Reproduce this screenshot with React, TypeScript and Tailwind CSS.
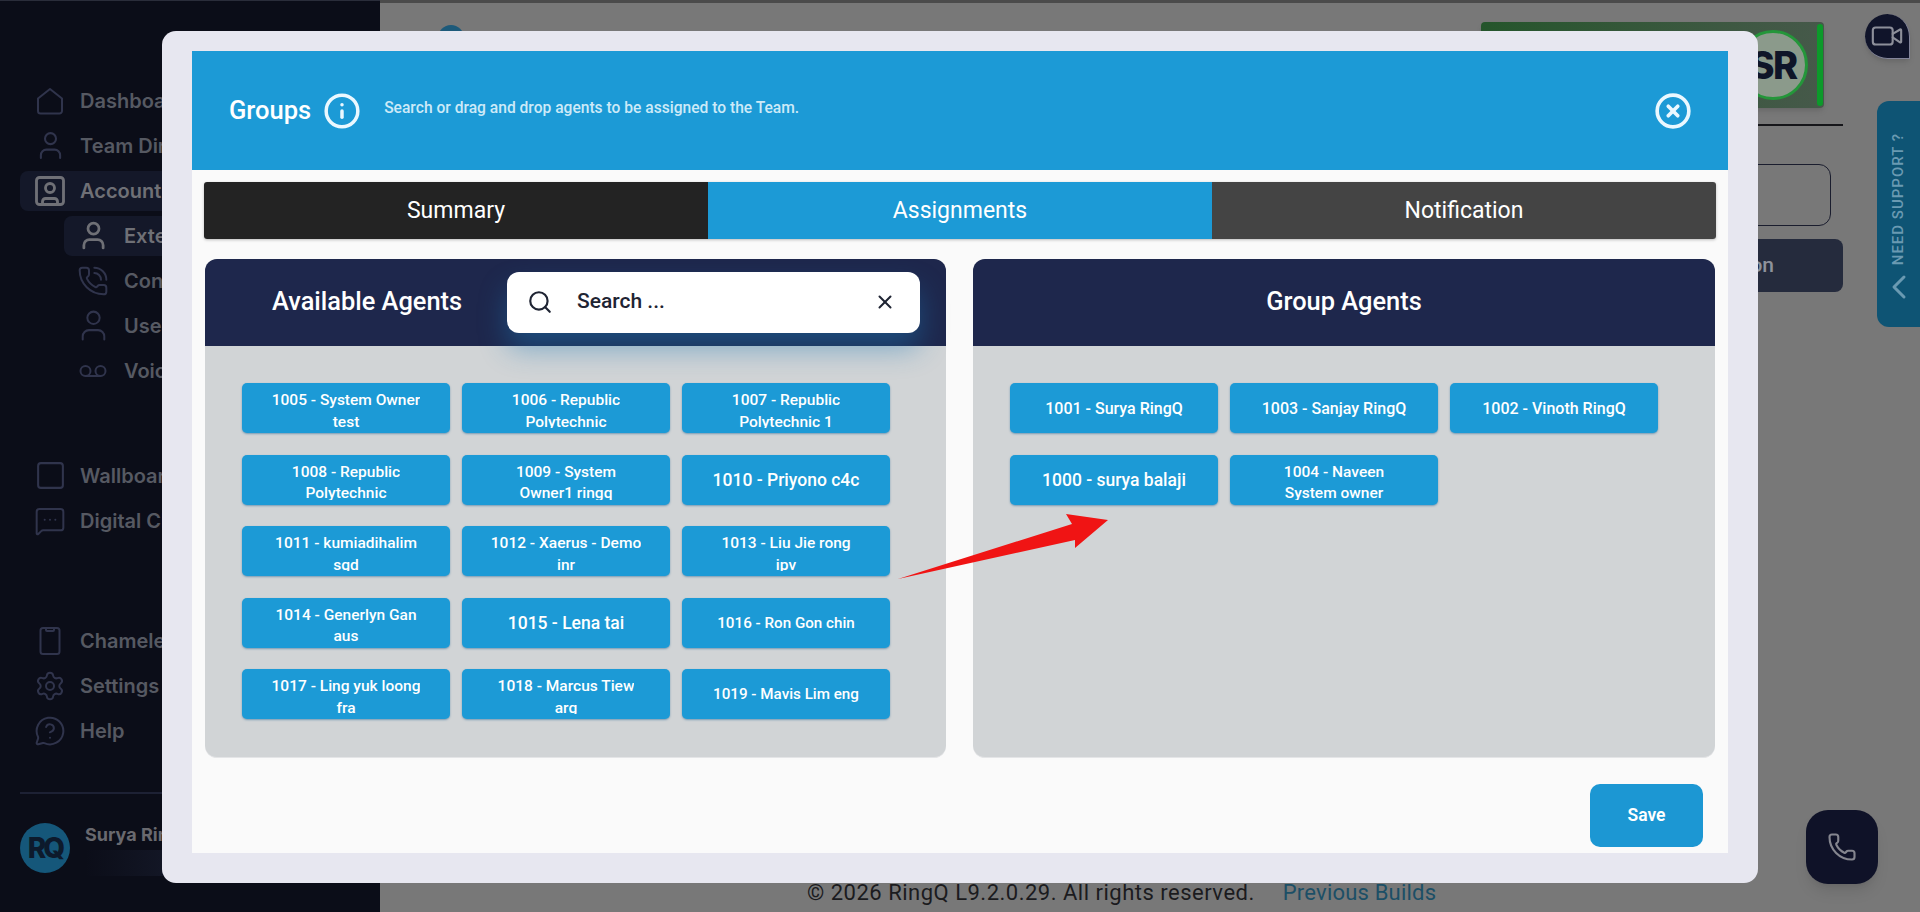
import React from "react";
import {
  ChevronLeft,
  CircleX,
  Info,
  MessageCircleQuestion,
  MessageSquareMore,
  Phone,
  PhoneCall,
  Search,
  Settings,
  Square,
  SquareUser,
  User,
  Video,
  Voicemail,
  X,
} from "lucide-react";

type Agent = { label: string; size: string };

const available: Agent[] = [
  { label: "1005 - System Owner\ntest", size: "two" },
  { label: "1006 - Republic\nPolytechnic", size: "two" },
  { label: "1007 - Republic\nPolytechnic 1", size: "two" },
  { label: "1008 - Republic\nPolytechnic", size: "two" },
  { label: "1009 - System\nOwner1 ringq", size: "two" },
  { label: "1010 - Priyono c4c", size: "big" },
  { label: "1011 - kumiadihalim\nsgd", size: "two" },
  { label: "1012 - Xaerus - Demo\ninr", size: "two" },
  { label: "1013 - Liu Jie rong\nipv", size: "two" },
  { label: "1014 - Generlyn Gan\naus", size: "two" },
  { label: "1015 - Lena tai", size: "big" },
  { label: "1016 - Ron Gon chin", size: "low" },
  { label: "1017 - Ling yuk loong\nfra", size: "two" },
  { label: "1018 - Marcus Tiew\narg", size: "two" },
  { label: "1019 - Mavis Lim eng", size: "low" },
];

const assigned: Agent[] = [
  { label: "1001 - Surya RingQ", size: "mid" },
  { label: "1003 - Sanjay RingQ", size: "mid" },
  { label: "1002 - Vinoth RingQ", size: "mid" },
  { label: "1000 - surya balaji", size: "big" },
  { label: "1004 - Naveen\nSystem owner", size: "two" },
];

function HomeIcon() {
  return (
    <svg width="28" height="28" viewBox="0 0 28 28" fill="none" stroke="currentColor" strokeWidth="2" strokeLinejoin="round">
      <path d="M2 11.500 14 2l12 9.500V24a2.500 2.500 0 0 1-2.500 2.500H4.500A2.500 2.500 0 0 1 2 24Z" />
    </svg>
  );
}

function PhoneFrameIcon() {
  return (
    <svg width="28" height="30" viewBox="0 0 28 30" fill="none" stroke="currentColor" strokeWidth="2" strokeLinejoin="round">
      <rect x="4.500" y="2" width="19" height="26" rx="2.500" />
      <path d="M10 2.500v1.500a1 1 0 0 0 1 1h6a1 1 0 0 0 1-1V2.500" />
    </svg>
  );
}

function NavRow({ icon, label, active }: { icon: React.ReactNode; label: string; active?: boolean }) {
  return (
    <div className="h-[45px] flex items-center">
      <div className={`ml-5 w-[400px] h-[40px] rounded-lg pl-4 flex items-center gap-4 ${active ? "bg-[#141829] text-[#6f7076]" : "text-[#565962]"}`}>
        <span className={`w-7 flex justify-center [&>svg]:shrink-0 ${active ? "" : "text-[#30344c]"}`}>{icon}</span>
        <span className="text-[20px] font-semibold whitespace-nowrap">{label}</span>
      </div>
    </div>
  );
}

function SubRow({ icon, label, active }: { icon: React.ReactNode; label: string; active?: boolean }) {
  return (
    <div className="h-[45px] flex items-center">
      <div className={`ml-16 w-[300px] h-[40px] rounded-lg pl-[15px] flex items-center gap-[17px] ${active ? "bg-[#141829] text-[#6f7076]" : "text-[#565962]"}`}>
        <span className={`w-7 flex justify-center [&>svg]:shrink-0 ${active ? "" : "text-[#30344c]"}`}>{icon}</span>
        <span className="text-[20px] font-semibold whitespace-nowrap">{label}</span>
      </div>
    </div>
  );
}

function Sidebar() {
  return (
    <aside className="w-[380px] shrink-0 h-full bg-[#0b0d18] border-t border-[#2a2d3a] pt-[77px] flex flex-col font-['Inter',sans-serif]">
      <NavRow icon={<HomeIcon />} label="Dashboard" />
      <NavRow icon={<User size={33} strokeWidth={1.5} />} label="Team Directory" />
      <NavRow icon={<SquareUser size={36} strokeWidth={1.9} />} label="Account" active />
      <SubRow icon={<User size={33} strokeWidth={2} />} label="Extensions" active />
      <SubRow icon={<PhoneCall size={32} strokeWidth={1.5} />} label="Contacts" />
      <SubRow icon={<User size={37} strokeWidth={1.3} />} label="Users" />
      <SubRow icon={<Voicemail size={30} strokeWidth={1.6} />} label="Voicemail" />
      <div className="mt-[60px]">
        <NavRow icon={<Square size={33} strokeWidth={1.5} />} label="Wallboard" />
        <NavRow icon={<MessageSquareMore size={32} strokeWidth={1.5} />} label="Digital Channels" />
      </div>
      <div className="mt-[75px]">
        <NavRow icon={<PhoneFrameIcon />} label="Chameleon" />
        <NavRow icon={<Settings size={32} strokeWidth={1.5} />} label="Settings" />
        <NavRow icon={<MessageCircleQuestion size={32} strokeWidth={1.5} />} label="Help" />
      </div>
      <div className="mt-[39px] mx-5 h-[2px] bg-[#1d2134]" />
      <div className="mt-[29px] ml-5 flex items-start gap-[15px]">
        <div className="w-[50px] h-[50px] rounded-full bg-[#15577a] flex items-center justify-center text-[#0d1a2c] font-extrabold text-[28px] tracking-[-3px]">
          RQ
        </div>
        <div className="flex flex-col">
          <span className="text-[18px] font-bold text-[#69696f] leading-[24px] whitespace-nowrap">Surya RingQ</span>
          <span className="mt-[3px] w-[100px] h-[26px] rounded bg-gradient-to-r from-[#0b0d18] to-[#151929]" />
        </div>
      </div>
    </aside>
  );
}

function Backdrop() {
  return (
    <main className="flex-1 h-full min-w-0 flex flex-col bg-[#787878] border-t-[3px] border-[#4b4b4b] font-['Roboto',sans-serif]">
      <div className="flex items-start pt-[19px]">
        <div className="ml-[58px] mt-[3px] w-[26px] h-[26px] rounded-full bg-[#1d5a7a]" />
        <div className="ml-auto mr-[96px] w-[343px] h-[86px] rounded bg-gradient-to-r from-[#24552b] to-[#46594a] flex items-center justify-end gap-[9px] pr-[1px] shadow-md">
          <span className="self-start mt-[2px] mr-auto ml-[127px] text-[18px] font-medium text-[#a7afa7] whitespace-nowrap">Queue Ring Group</span>
          <div className="shrink-0 w-[70px] h-[70px] rounded-full border-[3px] border-[#24963a] bg-[#8b9a8b] flex items-center justify-center text-[#0f1528] text-[38px] font-extrabold font-['Inter',sans-serif] tracking-[-1.5px]">
            SR
          </div>
          <div className="shrink-0 w-[6px] h-[82px] rounded-sm bg-[#0c9a2a]" />
        </div>
      </div>
      <div className="mt-[16px] ml-[60px] mr-[77px] h-[2px] bg-[#16161a]" />
      <div className="mt-[38px] ml-[60px] mr-[89px] h-[62px] rounded-xl border border-[#1a1d2e]" />
      <div className="mt-[13px] ml-[60px] mr-[77px] h-[53px] rounded-lg bg-[#252b3d] flex items-center justify-end pr-[69px] text-[21px] font-medium text-[#8e929b] whitespace-nowrap">
        Add Extension
      </div>
      <footer className="mt-auto ml-[427px] pb-[4px] flex gap-[28px] text-[22px] leading-[30px] tracking-[0.5px] whitespace-nowrap">
        <span className="text-[#1b1b1e]">© 2026 RingQ L9.2.0.29. All rights reserved.</span>
        <span className="text-[#1c4f66] tracking-[0.2px]">Previous Builds</span>
      </footer>
    </main>
  );
}

function AgentCard({ agent }: { agent: Agent }) {
  const text =
    agent.size === "big"
      ? "text-[17.5px]"
      : agent.size === "mid"
        ? "text-[16px]"
        : agent.size === "low"
          ? "text-[15.2px]"
          : "text-[15.5px]";
  return (
    <div className="h-[50px] rounded-[5px] bg-[#1c9ad6] shadow-[0_1px_2px_rgba(30,100,150,0.5)] flex items-center justify-center text-center text-white font-medium">
      {agent.size === "two" ? (
        <div className={`h-[38px] mt-[2px] overflow-hidden whitespace-pre-line leading-[21.6px] ${text}`}>{agent.label}</div>
      ) : (
        <div className={`mt-[1px] ${text}`}>{agent.label}</div>
      )}
    </div>
  );
}

function Panel({ header, agents, className }: { header: React.ReactNode; agents: Agent[]; className: string }) {
  return (
    <section className={`h-[499px] rounded-xl bg-[#d1d4d6] border-b border-[#e4e5e7] ${className}`}>
      <div className="h-[87px] pb-[2px] rounded-t-xl bg-[#1e274c] flex items-center text-white">{header}</div>
      <div className="pt-[37px] pl-[37px] grid grid-cols-[repeat(3,208px)] gap-x-3 gap-y-[21.5px]">
        {agents.map((a) => (
          <AgentCard key={a.label} agent={a} />
        ))}
      </div>
    </section>
  );
}

function Tab({ label, className }: { label: string; className: string }) {
  return (
    <div className={`flex-1 flex items-center justify-center pt-[2px] text-[23px] text-white ${className}`}>{label}</div>
  );
}

function GroupsModal() {
  return (
    <div className="absolute left-[162px] top-[31px] w-[1596px] h-[852px] rounded-[14px] bg-[#e7e7f0] pt-5 px-[30px] font-['Roboto',sans-serif]">
      <div className="h-[802px] bg-[#fafafa] flex flex-col">
        <div className="h-[119px] shrink-0 bg-[#1c9ad6] flex items-center pl-[37px] pr-[36px] text-white">
          <span className="text-[25.5px] font-medium">Groups</span>
          <Info size={38} strokeWidth={2.2} className="ml-[12px] text-[#eaf8ff]" />
          <span className="ml-[23px] -mt-[3px] text-[15.6px] font-medium text-[#cdeaf8]">Search or drag and drop agents to be assigned to the Team.</span>
          <CircleX size={38} strokeWidth={2.3} className="ml-auto mt-[1px] text-[#eaf8ff]" />
        </div>

        <div className="mt-3 mx-3 h-[57px] shrink-0 flex rounded-[3px] overflow-hidden shadow-[0_1px_3px_rgba(0,0,0,0.25)]">
          <Tab label="Summary" className="bg-[#232323]" />
          <Tab label="Assignments" className="bg-[#1c9ad6]" />
          <Tab label="Notification" className="bg-[#444444]" />
        </div>

        <div className="mt-5 mx-[13px] flex gap-[27px]">
          <Panel
            className="flex-1"
            agents={available}
            header={
              <>
                <span className="ml-[67px] text-[25.4px] font-medium whitespace-nowrap">Available Agents</span>
                <div className="ml-auto mr-[26px] mt-[1px] w-[413px] h-[61px] rounded-xl bg-white flex items-center pl-[20px] pr-[24px] text-[#1f2433] shadow-[0_16px_28px_rgba(28,120,180,0.45)]">
                  <Search size={26} strokeWidth={2} />
                  <span className="ml-[24px] text-[21px] font-medium">Search ...</span>
                  <X size={22} strokeWidth={2.2} className="ml-auto" />
                </div>
              </>
            }
          />
          <Panel
            className="w-[742px] shrink-0"
            agents={assigned}
            header={<span className="w-full text-center text-[25.4px] font-medium">Group Agents</span>}
          />
        </div>

        <div className="mt-[26px] pr-[25px] flex justify-end">
          <div className="w-[113px] h-[63px] rounded-[10px] bg-[#1c97d3] flex items-center justify-center text-white text-[17.5px] font-semibold">
            Save
          </div>
        </div>
      </div>
    </div>
  );
}

export default function App() {
  return (
    <div className="relative w-full h-[912px] flex overflow-hidden">
      <Sidebar />
      <Backdrop />

      <div className="absolute right-[10px] top-[14px] w-[45px] h-[45px] rounded-full rounded-br-none bg-[#10142a] border-b border-r border-[#83859a] shadow-md flex items-center justify-center text-[#8d8f9a]">
        <Video size={34} strokeWidth={1.5} />
      </div>

      <div className="absolute right-0 top-[101px] w-[43px] h-[226px] rounded-l-xl bg-[#0e5474] flex flex-col items-center justify-end pb-[20px] gap-[2px] text-[#6a9ab2] font-['Roboto',sans-serif]">
        <span className="[writing-mode:vertical-rl] rotate-180 text-[15px] font-medium tracking-[1px] whitespace-nowrap">NEED SUPPORT ?</span>
        <ChevronLeft size={40} strokeWidth={1.8} className="shrink-0" />
      </div>

      <div className="absolute left-[1806px] top-[810px] w-[72px] h-[74px] rounded-[22px] bg-[#0f1228] shadow-lg flex items-center justify-center text-[#85868f]">
        <Phone size={30} strokeWidth={1.7} />
      </div>

      <GroupsModal />

      <svg className="absolute left-[890px] top-[505px]" width="225" height="80" viewBox="890 505 225 80">
        <polygon points="898,579 1072,524 1066,514 1108,520 1075,548 1075,540" fill="#f01414" />
      </svg>
    </div>
  );
}
